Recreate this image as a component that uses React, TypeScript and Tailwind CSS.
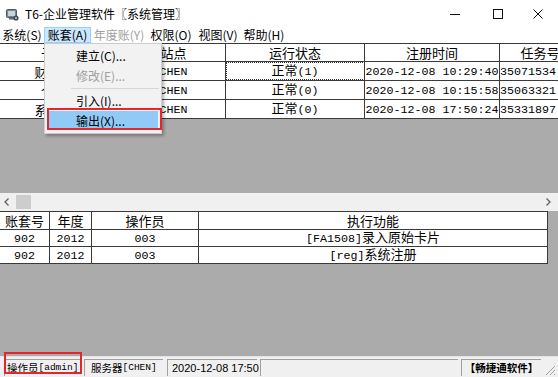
import React from 'react';

// ASCII runs use a monospace face so they look like SimSun half-width glyphs
const tableAscii = "font-['Liberation_Mono',monospace] text-[11.67px]";
const statusAscii = "font-['Liberation_Mono',monospace] text-[9.5px]";

function Mix({ s, a }: { s: string; a: string }) {
    const parts = s.split(/([\x20-\x7e]+)/);
    return (
        <>
            {parts.map((p, i) =>
                p === '' ? null : /^[\x20-\x7e]+$/.test(p) ? (
                    <span key={i} className={a}>{p}</span>
                ) : (
                    <span key={i}>{p}</span>
                )
            )}
        </>
    );
}

interface Col {
    w: string;
}

const topCols: Col[] = [{ w: 'w-[122px]' }, { w: 'w-[104px]' }, { w: 'w-[139px]' }, { w: 'w-[135px]' }, { w: 'w-[80px]' }];
const topHeader = ['子系统', '站点', '运行状态', '注册时间', '任务号'];
const topRows = [
    ['财务会计', 'CHEN', '正常(1)', '2020-12-08 10:29:40', '35071534'],
    ['个人所', 'CHEN', '正常(0)', '2020-12-08 10:15:58', '35063321'],
    ['系统管理', 'CHEN', '正常(0)', '2020-12-08 17:50:24', '35331897'],
];

const bottomCols = ['w-[50px]', 'w-[42px]', 'w-[107px]', 'w-[349px]'];
const bottomHeader = ['账套号', '年度', '操作员', '执行功能'];
const bottomRows = [
    ['902', '2012', '003', '[FA1508]录入原始卡片'],
    ['902', '2012', '003', '[reg]系统注册'],
];

function TopRow({ cells, header }: { cells: string[]; header?: boolean }) {
    return (
        <div className={`flex h-[19px] border-b border-[#3a3a3a] ${header ? 'border-t' : ''}`}>
            {cells.map((c, i) => (
                <div
                    key={i}
                    className={`${topCols[i].w} shrink-0 h-full flex items-center overflow-hidden whitespace-nowrap ${
                        i < 4 ? 'border-r border-[#3a3a3a]' : ''
                    } ${i === 4 && !header ? 'justify-start' : 'justify-center'} ${
                        !header && i === 2 && cells[2] === '正常(1)' ? 'outline outline-1 outline-dotted outline-[#333] -outline-offset-1' : ''
                    }`}
                >
                    <span className="leading-[17px]">
                        <Mix s={c} a={tableAscii} />
                    </span>
                </div>
            ))}
        </div>
    );
}

function BottomRow({ cells, header }: { cells: string[]; header?: boolean }) {
    return (
        <div className={`flex ${header ? 'h-[19px] border-t' : 'h-[17px]'} border-b border-[#3a3a3a] bg-white w-[548px]`}>
            {cells.map((c, i) => (
                <div
                    key={i}
                    className={`${bottomCols[i]} shrink-0 h-full flex items-center justify-center overflow-hidden whitespace-nowrap border-r border-[#3a3a3a]`}
                >
                    <span className="leading-[16px]">
                        <Mix s={c} a={tableAscii} />
                    </span>
                </div>
            ))}
        </div>
    );
}

export default function App() {
    return (
        <div className="relative w-[558px] h-[377px] overflow-hidden bg-white flex flex-col font-['Noto_Sans_CJK_SC',sans-serif] text-black">
            {/* Title bar */}
            <div className="h-[27px] shrink-0 flex items-center">
                <svg width="13" height="13" viewBox="0 0 13 13" className="ml-[6px] mt-[1px]">
                    <rect x="0.5" y="1.5" width="10" height="8" rx="1" fill="#7b8894" stroke="#4d5963" />
                    <rect x="2" y="3" width="7" height="5" fill="#c7d3dc" />
                    <rect x="3" y="10" width="5" height="1.5" fill="#5d6a75" />
                    <circle cx="10" cy="10" r="2.6" fill="#3f4a54" />
                    <circle cx="10" cy="10" r="1" fill="#c7d3dc" />
                </svg>
                <span className="ml-[6px] text-[12px] leading-none">T6-企业管理软件〖系统管理〗</span>
                <div className="ml-auto flex items-center h-full">
                    <div className="w-[46px] h-full flex items-center justify-center">
                        <svg width="10" height="10" viewBox="0 0 10 10">
                            <path d="M0 5.5h10" stroke="#111" strokeWidth="1" />
                        </svg>
                    </div>
                    <div className="w-[40px] h-full flex items-center justify-center">
                        <svg width="10" height="10" viewBox="0 0 10 10">
                            <rect x="0.5" y="0.5" width="9" height="9" fill="none" stroke="#111" strokeWidth="1" />
                        </svg>
                    </div>
                    <div className="w-[40px] h-full flex items-center justify-center">
                        <svg width="10" height="10" viewBox="0 0 10 10">
                            <path d="M0.5 0.5l9 9M9.5 0.5l-9 9" stroke="#111" strokeWidth="1" />
                        </svg>
                    </div>
                </div>
            </div>

            {/* Menu bar */}
            <div className="h-[16px] shrink-0 flex items-stretch text-[12px] leading-none">
                <div className="w-[44px] flex items-center justify-center">系统(S)</div>
                <div className="w-[47px] flex items-center justify-center bg-[#cce8ff] border border-[#99d1ff]">账套(A)</div>
                <div className="w-[56px] flex items-center justify-center text-[#a0a0a0]">年度账(Y)</div>
                <div className="w-[48px] flex items-center justify-center">权限(O)</div>
                <div className="w-[46px] flex items-center justify-center">视图(V)</div>
                <div className="w-[46px] flex items-center justify-center">帮助(H)</div>
            </div>

            {/* Upper grid */}
            <div className="h-[150px] shrink-0 bg-[#ababab] overflow-hidden text-[13px]">
                <div className="bg-white w-[580px]">
                    <TopRow cells={topHeader} header />
                    {topRows.map((r, i) => (
                        <TopRow key={i} cells={r} />
                    ))}
                </div>
            </div>

            {/* Horizontal scrollbar */}
            <div className="h-[18px] shrink-0 bg-[#f0f0f0] flex items-center">
                <svg width="6" height="8" viewBox="0 0 6 8" className="ml-[4px]">
                    <path d="M4.5 0.5L1 4l3.5 3.5" fill="none" stroke="#606060" strokeWidth="1.3" />
                </svg>
                <div className="ml-[6px] w-[15px] h-[14px] bg-[#cdcdcd]" />
                <svg width="6" height="8" viewBox="0 0 6 8" className="ml-auto mr-[7px]">
                    <path d="M1.5 0.5L5 4 1.5 7.5" fill="none" stroke="#606060" strokeWidth="1.3" />
                </svg>
            </div>

            {/* Lower grid */}
            <div className="flex-1 bg-[#ababab] text-[13px]">
                <BottomRow cells={bottomHeader} header />
                {bottomRows.map((r, i) => (
                    <BottomRow key={i} cells={r} />
                ))}
            </div>

            {/* Status bar */}
            <div className="h-[21px] shrink-0 bg-[#f0f0f0] border-t border-[#e3e3e3] flex items-stretch pt-[2px] pb-[1px] text-[10.5px] leading-none">
                <div className="ml-[4px] w-[77px] flex items-center pl-[2px] border-l border-t border-[#a0a0a0] whitespace-nowrap">
                    <Mix s="操作员[admin]" a={statusAscii} />
                </div>
                <div className="ml-[3px] w-[79px] flex items-center pl-[6px] border-l border-t border-[#a0a0a0] whitespace-nowrap">
                    <Mix s="服务器[CHEN]" a={statusAscii} />
                </div>
                <div className="ml-[4px] w-[90px] flex items-center pl-[4px] border-l border-t border-[#a0a0a0] whitespace-nowrap font-['Liberation_Sans',sans-serif] text-[11px]">
                    2020-12-08 17:50
                </div>
                <div className="ml-[3px] w-[198px] border-l border-t border-[#a0a0a0]" />
                <div className="ml-[3px] w-[80px] flex items-center justify-center border-l border-t border-[#a0a0a0] whitespace-nowrap font-bold">
                    【畅捷通软件】
                </div>
                <svg width="12" height="12" viewBox="0 0 12 12" className="ml-auto mr-[2px] self-end">
                    <path d="M11 2L2 11M11 6L6 11M11 10L10 11" stroke="#a0a0a0" strokeWidth="1" />
                </svg>
            </div>

            {/* Account menu dropdown */}
            <div className="absolute left-[44px] top-[43px] w-[118px] bg-[#f2f2f2] border border-[#cccccc] shadow-[2px_2px_3px_rgba(0,0,0,0.3)] pt-[2px] pb-[3px] text-[12px] leading-none">
                <div className="h-[20px] flex items-center pl-[31px]">建立(C)...</div>
                <div className="h-[19px] flex items-center pl-[31px] text-[#a0a0a0]">修改(E)...</div>
                <div className="h-[6px] flex items-center pl-[26px] pr-[2px]">
                    <div className="h-px w-full bg-[#d7d7d7]" />
                </div>
                <div className="h-[20px] flex items-center pl-[31px]">引入(I)...</div>
                <div className="h-[19px] mx-[3px] flex items-center pl-[28px] bg-[#91c9f7]">输出(X)...</div>
            </div>

            {/* Red annotation boxes */}
            <div className="absolute left-[47px] top-[108px] w-[115px] h-[22px] border-2 border-[#e5262c]" />
            <div className="absolute left-[4px] top-[352px] w-[78px] h-[22px] border-2 border-[#e5262c]" />
        </div>
    );
}
